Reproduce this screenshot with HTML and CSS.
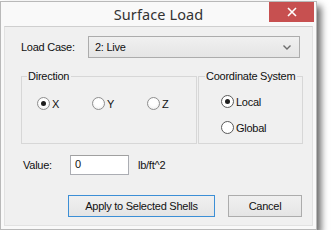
FILE: index.html
```html
<!DOCTYPE html>
<html>
<head>
<meta charset="utf-8">
<link rel="stylesheet" href="styles.css">
</head>
<body>
<div class="window">
  <div class="titlebar">
    <div class="title">Surface Load</div>
    <div class="close">
      <svg width="10" height="10" viewBox="0 0 10 10"><path d="M1 1L9 9M9 1L1 9" stroke="#fff" stroke-width="1.6" fill="none"/></svg>
    </div>
  </div>
  <div class="client">
    <div class="row-case">
      <span class="lbl-case">Load Case:</span>
      <div class="select">
        <span>2: Live</span>
        <svg class="chev" width="8" height="5" viewBox="0 0 8 5"><path d="M0.5 0.5L4 4L7.5 0.5" stroke="#6d6d6d" stroke-width="1.4" fill="none"/></svg>
      </div>
    </div>
    <div class="groups">
      <fieldset class="grp grp-dir">
        <legend>Direction</legend>
        <div class="dir-body">
          <div class="radio-item w55"><span class="radio on"></span><span>X</span></div>
          <div class="radio-item w55"><span class="radio"></span><span>Y</span></div>
          <div class="radio-item"><span class="radio"></span><span>Z</span></div>
        </div>
      </fieldset>
      <fieldset class="grp grp-coord">
        <legend>Coordinate System</legend>
        <div class="coord-body">
          <div class="radio-item"><span class="radio on dark"></span><span>Local</span></div>
          <div class="radio-item"><span class="radio dark"></span><span>Global</span></div>
        </div>
      </fieldset>
    </div>
    <div class="row-value">
      <span class="lbl-value">Value:</span>
      <div class="input">0</div>
      <span class="unit">lb/ft^2</span>
    </div>
    <div class="row-buttons">
      <div class="btn btn-default">Apply to Selected Shells</div>
      <div class="btn btn-cancel">Cancel</div>
    </div>
  </div>
</div>
</body>
</html>
```

FILE: styles.css
```css
html, body {
  margin: 0;
  padding: 0;
  background: #ffffff;
}
body {
  font-family: "Liberation Sans", Arial, sans-serif;
  font-size: 11px;
  letter-spacing: -0.25px;
  color: #111;
}
.window {
  margin-top: 1px;
  width: 315px;
  height: 227px;
  border: 1px solid #b9b9b9;
  background: #f9f9f9;
  box-shadow: 4px 5px 7px rgba(0, 0, 0, 0.6);
  display: flex;
  flex-direction: column;
}
.titlebar {
  height: 24px;
  display: flex;
  position: relative;
  justify-content: center;
}
.title {
  font-family: "Noto Sans", "Open Sans", sans-serif;
  font-size: 14.5px;
  color: #333;
  line-height: 24px;
  letter-spacing: 0.1px;
}
.close {
  position: absolute;
  right: 2px;
  top: 0;
  width: 45px;
  height: 20px;
  background: #c75050;
  display: flex;
  align-items: center;
  justify-content: center;
}
.client {
  margin: 0 3px 3px 3px;
  flex: 1;
  background: #f0f0f0;
  border: 1px solid #e2e2e2;
  border-top-color: #cfcfcf;
}
.row-case {
  display: flex;
  align-items: center;
  margin-top: 9px;
  height: 22px;
}
.lbl-case {
  margin-left: 16px;
  width: 67px;
}
.select {
  border: 1px solid #acacac;
  background: linear-gradient(#f0f0f0, #e5e5e5);
  display: flex;
  align-items: center;
  justify-content: space-between;
  padding: 0 8px 0 6px;
  box-sizing: border-box;
  width: 212px;
  height: 22px;
}
.groups {
  display: flex;
  margin-left: 16px;
  margin-top: 12px;
}
.grp {
  margin: 0;
  padding: 0;
  border: 1px solid #d7d7d7;
  min-width: 0;
  box-sizing: border-box;
}
.grp legend {
  padding: 0 2px 0 1px;
  margin-left: 5px;
  line-height: 13px;
}
.grp-dir {
  width: 176px;
  height: 74px;
}
.grp-coord {
  margin-left: 1px;
  width: 105px;
  height: 74px;
}
.grp-coord legend {
  margin-left: 6px;
}
.dir-body {
  display: flex;
  padding: 14px 0 0 15px;
}
.coord-body {
  display: flex;
  flex-direction: column;
  gap: 13px;
  padding: 12px 0 0 22px;
}
.radio-item {
  display: flex;
  align-items: center;
  height: 13px;
}
.w55 {
  width: 55px;
}
.radio {
  width: 11px;
  height: 11px;
  border: 1px solid #8f8f8f;
  border-radius: 50%;
  background: radial-gradient(circle at 50% 40%, #ffffff 40%, #e8e8e8 100%);
  margin-right: 2px;
  position: relative;
  box-sizing: content-box;
}
.radio.dark {
  border-color: #5a5a5a;
  background: #fff;
}
.radio.on::after {
  content: "";
  position: absolute;
  left: 3px;
  top: 3px;
  width: 5px;
  height: 5px;
  border-radius: 50%;
  background: #1e1e1e;
}
.row-value {
  display: flex;
  align-items: center;
  margin-top: 11px;
  height: 20px;
}
.lbl-value {
  margin-left: 18px;
  width: 47px;
}
.input {
  width: 59px;
  height: 20px;
  box-sizing: border-box;
  border: 1px solid #abadb3;
  border-top-color: #a0a0a0;
  background: #fff;
  padding-left: 4px;
  line-height: 17px;
}
.unit {
  margin-left: 9px;
}
.row-buttons {
  display: flex;
  margin-top: 20px;
  margin-left: 63px;
}
.btn {
  height: 22px;
  box-sizing: border-box;
  border: 1px solid #acacac;
  background: linear-gradient(#f0f0f0, #e5e5e5);
  display: flex;
  align-items: center;
  justify-content: center;
}
.btn-default {
  width: 147px;
  border-color: #3c8fd6;
}
.btn-cancel {
  width: 74px;
  margin-left: 13px;
}
```
